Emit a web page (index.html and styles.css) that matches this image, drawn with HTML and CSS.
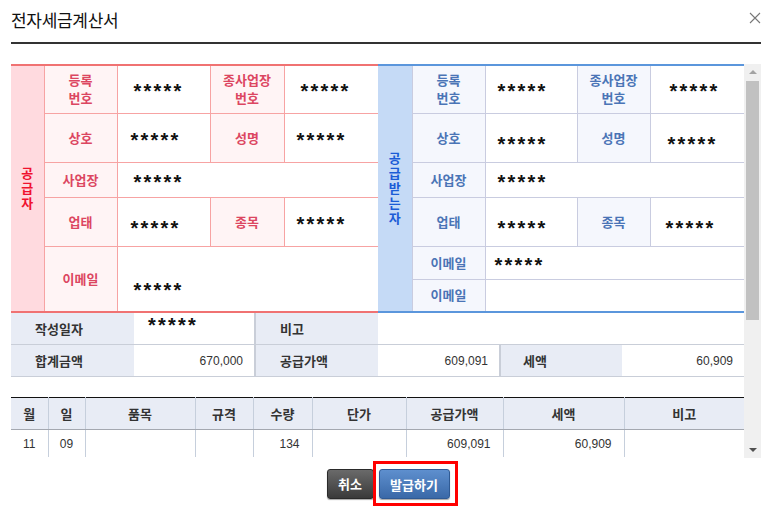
FILE: index.html
```html
<!DOCTYPE html>
<html lang="ko">
<head>
  <meta charset="UTF-8" />
  <meta name="viewport" content="width=device-width, initial-scale=1" />
  <title>전자세금계산서</title>
  <link rel="stylesheet" href="styles.css">
</head>
<body>
  <div class="dialog">
    <div class="head">
      <h2 class="title">전자세금계산서</h2>
      <svg class="close" width="12" height="12" viewBox="0 0 12 12">
        <path d="M1 1 L11 11 M11 1 L1 11" stroke="#777" stroke-width="1.1" fill="none" />
      </svg>
    </div>

    <div class="body">
      <div class="sheet">
        <div class="parties">
          <table class="party supplier">
            <colgroup>
              <col style="width:33px"><col style="width:73px"><col style="width:93px"><col style="width:74px"><col style="width:94px">
            </colgroup>
            <tr class="h48">
              <th rowspan="5" class="side"><span class="stack">공급자</span></th>
              <th>등록<br>번호</th>
              <td><span class="mask">*****</span></td>
              <th>종사업장<br>번호</th>
              <td class="last"><span class="mask">*****</span></td>
            </tr>
            <tr class="h49">
              <th>상호</th>
              <td class="pl13"><span class="mask">*****</span></td>
              <th>성명</th>
              <td class="last pl12"><span class="mask">*****</span></td>
            </tr>
            <tr class="h35">
              <th>사업장</th>
              <td colspan="3" class="last"><span class="mask">*****</span></td>
            </tr>
            <tr class="h49">
              <th>업태</th>
              <td class="pl13 low"><span class="mask">*****</span></td>
              <th>종목</th>
              <td class="last pl12"><span class="mask">*****</span></td>
            </tr>
            <tr class="h66">
              <th>이메일</th>
              <td colspan="3" class="last lower"><span class="mask">*****</span></td>
            </tr>
          </table>

          <table class="party receiver">
            <colgroup>
              <col style="width:34px"><col style="width:73px"><col style="width:92px"><col style="width:73px"><col style="width:95px">
            </colgroup>
            <tr class="h48">
              <th rowspan="6" class="side"><span class="stack">공급받는자</span></th>
              <th>등록<br>번호</th>
              <td class="pl12"><span class="mask">*****</span></td>
              <th>종사업장<br>번호</th>
              <td class="last pl19"><span class="mask">*****</span></td>
            </tr>
            <tr class="h49">
              <th>상호</th>
              <td class="pl12 low"><span class="mask">*****</span></td>
              <th>성명</th>
              <td class="last pl17 low"><span class="mask">*****</span></td>
            </tr>
            <tr class="h35">
              <th>사업장</th>
              <td colspan="3" class="last pl12"><span class="mask">*****</span></td>
            </tr>
            <tr class="h49">
              <th>업태</th>
              <td class="pl12 low"><span class="mask">*****</span></td>
              <th>종목</th>
              <td class="last pl15 low"><span class="mask">*****</span></td>
            </tr>
            <tr class="h33">
              <th>이메일</th>
              <td colspan="3" class="last pl9"><span class="mask">*****</span></td>
            </tr>
            <tr class="h33">
              <th>이메일</th>
              <td colspan="3" class="last"></td>
            </tr>
          </table>
        </div>

        <table class="summary">
          <colgroup>
            <col style="width:123px"><col style="width:121px"><col style="width:123px"><col style="width:122px"><col style="width:122px"><col style="width:122px">
          </colgroup>
          <tr>
            <th>작성일자</th>
            <td class="date"><span class="mask up">*****</span></td>
            <th class="sep">비고</th>
            <td colspan="3"></td>
          </tr>
          <tr>
            <th>합계금액</th>
            <td class="num">670,000</td>
            <th class="sep">공급가액</th>
            <td class="num">609,091</td>
            <th class="sep tax">세액</th>
            <td class="num">60,909</td>
          </tr>
        </table>

        <table class="items">
          <colgroup>
            <col style="width:37px"><col style="width:37px"><col style="width:110px"><col style="width:58px"><col style="width:59px"><col style="width:94px"><col style="width:97px"><col style="width:121px"><col style="width:120px">
          </colgroup>
          <tr>
            <th>월</th><th>일</th><th>품목</th><th>규격</th><th>수량</th><th>단가</th><th>공급가액</th><th>세액</th><th>비고</th>
          </tr>
          <tr>
            <td class="c">11</td><td class="c">09</td><td></td><td></td><td class="num">134</td><td></td><td class="num">609,091</td><td class="num">60,909</td><td></td>
          </tr>
        </table>
      </div>

      <div class="scrollbar">
        <span class="arrow up-arrow"></span>
        <span class="thumb"></span>
        <span class="arrow down-arrow"></span>
      </div>
    </div>

    <div class="actions">
      <button type="button" class="btn cancel">취소</button>
      <span class="highlight">
        <button type="button" class="btn issue">발급하기</button>
      </span>
    </div>
  </div>
</body>
</html>
```

FILE: styles.css
```css
body {
  margin: 0;
  font-family: "Noto Sans CJK KR", "Liberation Sans", sans-serif;
  background: #fff;
  color: #222;
}
.dialog {
  padding: 0 14px 0 11px;
}
.head {
  display: flex;
  justify-content: space-between;
  align-items: center;
  height: 42px;
  border-bottom: 2px solid #333;
}
.title {
  margin: 0 0 4px;
  font-size: 17px;
  font-weight: normal;
  color: #111;
  letter-spacing: -0.3px;
}
.close {
  margin: 0 0 6px;
}
.body {
  display: flex;
  margin-top: 20px;
  height: 394px;
}
.sheet {
  width: 733px;
  overflow: hidden;
}
.parties {
  display: flex;
}
table {
  border-collapse: collapse;
  table-layout: fixed;
}
.party {
  width: 367px;
  border-top: 2px solid #f07272;
  border-bottom: 2px solid #f07272;
}
.receiver {
  width: 366px;
  border-top-color: #5b96dc;
  border-bottom-color: #5b96dc;
}
.party th,
.party td {
  padding: 0;
  font-size: 13px;
  line-height: 18px;
}
.party th {
  font-weight: bold;
  text-align: center;
}
.supplier th,
.supplier td {
  border: 1px solid #f7a3a3;
}
.supplier th {
  background: #fff4f5;
  color: #dc4661;
}
.receiver th,
.receiver td {
  border: 1px solid #c9cce0;
}
.receiver th {
  background: #f5f7fd;
  color: #4a74b6;
}
.party td {
  padding-left: 16px;
}
.party td.last {
  border-right: none;
}
.party th.side {
  border-left: none;
}
.stack {
  display: inline-block;
  width: 1em;
  word-break: break-all;
  font-size: 13px;
  line-height: 15px;
}
.supplier th.side {
  background: #ffdadf;
  color: #f0122e;
}
.receiver th.side {
  background: #c5daf6;
  color: #1b5cd6;
}
.h48 { height: 48px; }
.h49 { height: 49px; }
.h35 { height: 35px; }
.h33 { height: 33px; }
.h66 { height: 66px; }
.party td.pl9 { padding-left: 9px; }
.party td.pl12 { padding-left: 12px; }
.party td.pl13 { padding-left: 13px; }
.party td.pl15 { padding-left: 15px; }
.party td.pl17 { padding-left: 17px; }
.party td.pl19 { padding-left: 19px; }
.party td.low { padding-top: 8px; }
.party td.lower { padding-top: 18px; }
.mask {
  display: inline-block;
  padding-top: 7px;
  font-family: "Liberation Sans", sans-serif;
  font-size: 20px;
  font-weight: bold;
  letter-spacing: 2.2px;
  color: #111;
  line-height: 16px;
}
.mask.up {
  padding-top: 0;
}
.summary {
  width: 733px;
}
.summary th,
.summary td {
  height: 31px;
  padding: 0;
  border-bottom: 1px solid #c9ced8;
  font-size: 13px;
  line-height: 16px;
}
.summary th {
  background: #e8ecf5;
  text-align: left;
  padding-left: 24px;
  font-weight: bold;
  color: #333;
}
.summary th.sep {
  border-left: 2px solid #c9ced8;
}
.summary th.tax {
  padding-left: 22px;
}
.summary td.date {
  padding-left: 14px;
  vertical-align: top;
  padding-top: 4px;
  height: 27px;
}
.summary .num {
  text-align: right;
  padding-right: 11px;
  font-family: "Liberation Sans", sans-serif;
  font-size: 12px;
  color: #333;
}
.items {
  width: 733px;
  margin-top: 20px;
  border-top: 1px solid #111;
}
.items th {
  height: 31px;
  padding: 0;
  background: #e8ecf5;
  border-bottom: 1px solid #a4a8b0;
  border-left: 1px solid #c6cfdc;
  font-size: 13px;
  line-height: 16px;
  font-weight: bold;
  color: #333;
}
.items td {
  height: 27px;
  padding: 0;
  border-left: 1px solid #c6cfdc;
  font-family: "Liberation Sans", sans-serif;
  font-size: 12px;
  color: #333;
}
.items th:first-child,
.items td:first-child {
  border-left: none;
}
.items td.c {
  text-align: center;
}
.items td.num {
  text-align: right;
  padding-right: 12px;
}
.scrollbar {
  width: 17px;
  background: #f0f0f0;
  display: flex;
  flex-direction: column;
  align-items: center;
}
.arrow {
  width: 0;
  height: 0;
  border-left: 4px solid transparent;
  border-right: 4px solid transparent;
}
.up-arrow {
  margin-top: 6px;
  border-bottom: 4px solid #a3a3a3;
}
.thumb {
  width: 13px;
  height: 239px;
  margin-top: 7px;
  background: #c1c1c1;
}
.down-arrow {
  margin-top: auto;
  margin-bottom: 6px;
  border-top: 4px solid #505050;
}
.actions {
  display: flex;
  justify-content: center;
  align-items: center;
  padding-left: 12px;
  margin-top: 3px;
}
.highlight {
  display: inline-flex;
  border: 3px solid #f00;
  padding: 5px 5px 4px 3px;
  margin-left: -1px;
}
.btn {
  height: 30px;
  padding: 0 10px;
  border-radius: 3px;
  font-family: "Noto Sans CJK KR", sans-serif;
  font-size: 13px;
  font-weight: bold;
  color: #fff;
  cursor: pointer;
  box-shadow: 0 1px 1px rgba(0, 0, 0, 0.35);
}
.cancel {
  width: 47px;
  background: linear-gradient(#6a6a6a, #3a3a3a);
  border: 1px solid #2a2a2a;
}
.issue {
  width: 71px;
  background: linear-gradient(#5e8fce, #3a69a8);
  border: 1px solid #2f5a94;
}
```
